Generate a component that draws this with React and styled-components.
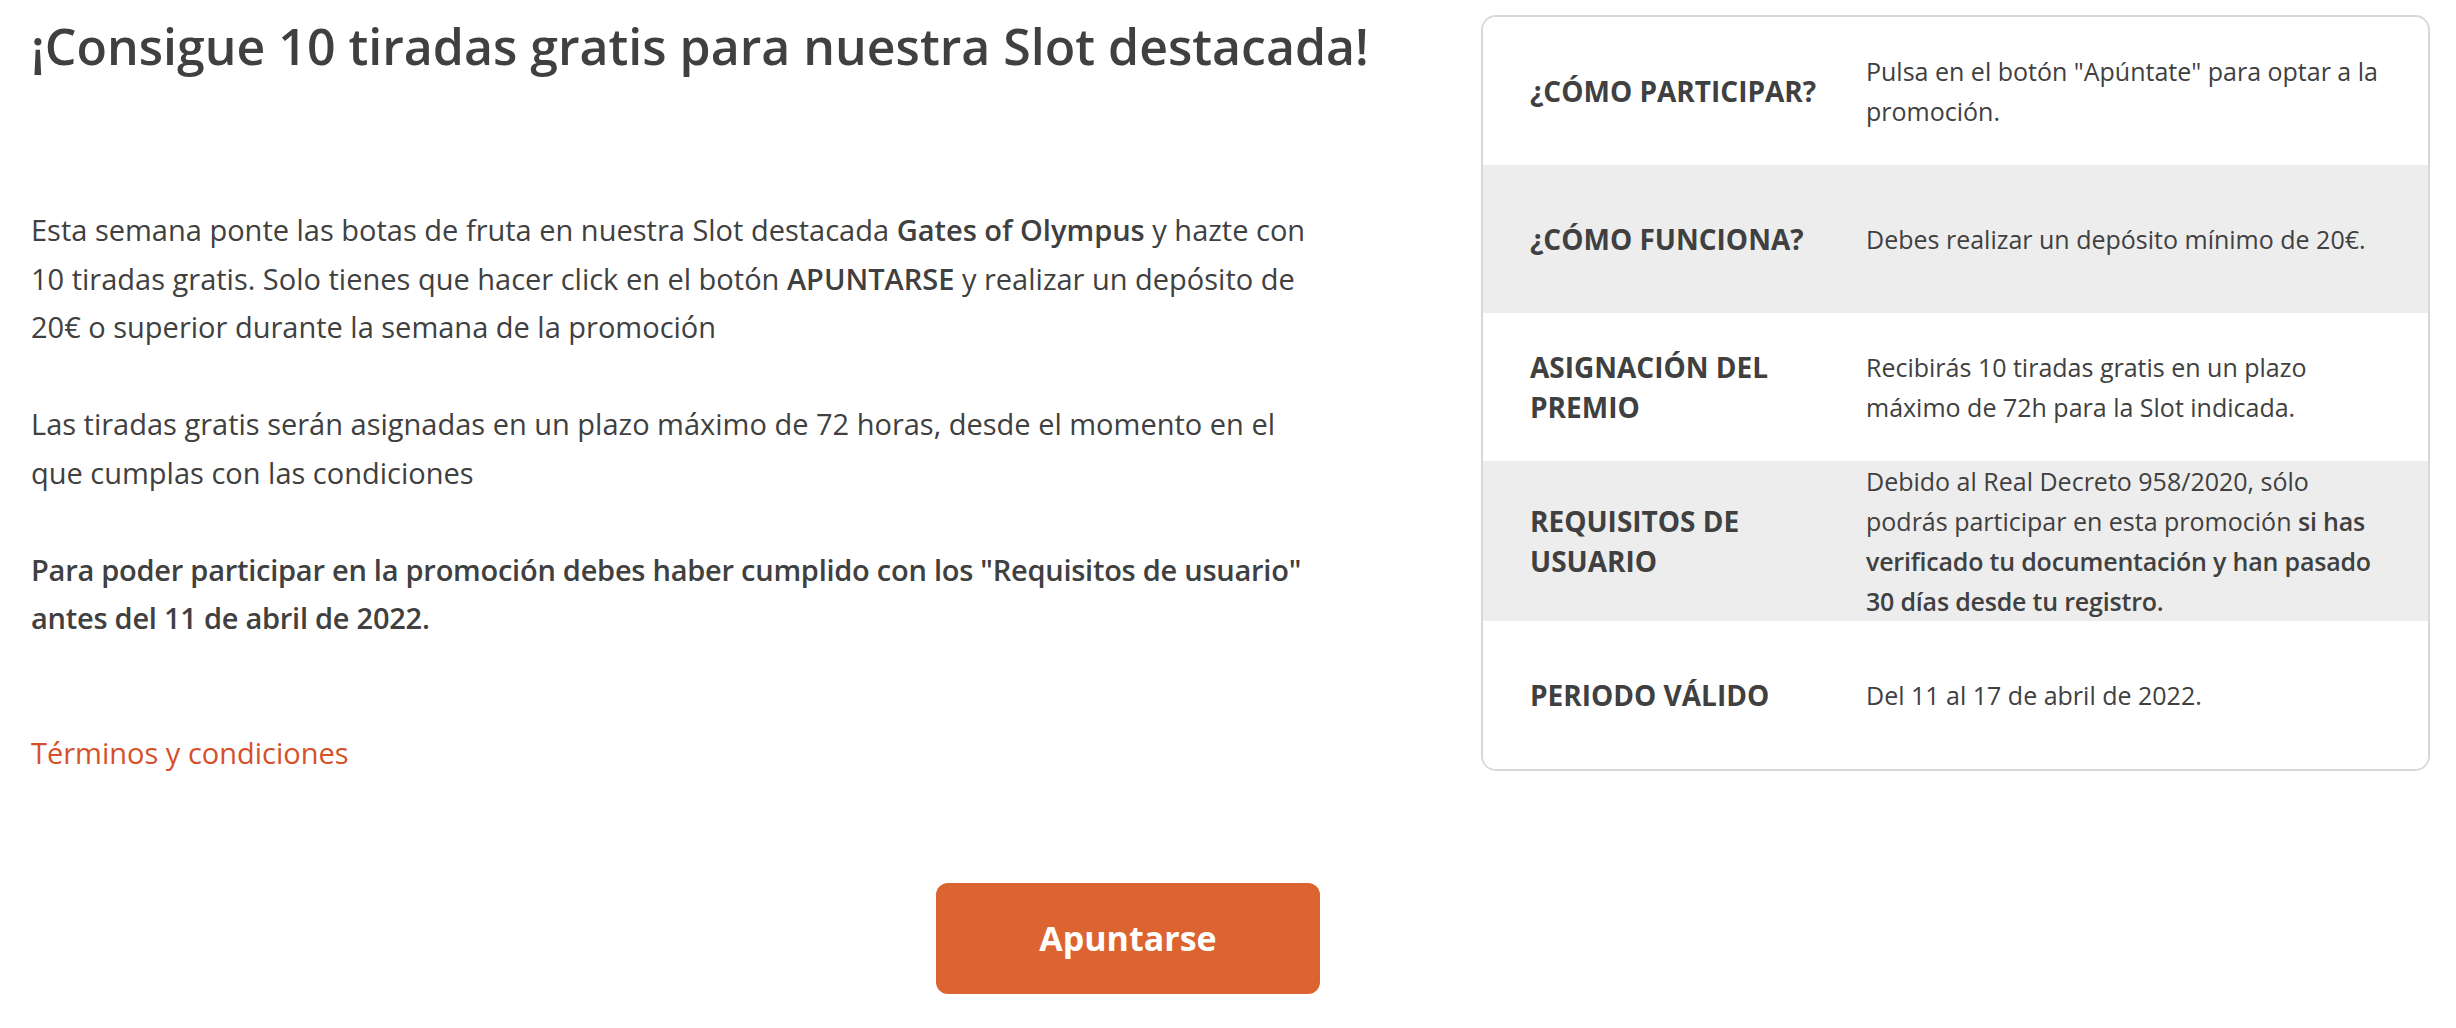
import React from 'react';
import styled, { createGlobalStyle } from 'styled-components';

const GlobalStyle = createGlobalStyle`
  body {
    margin: 0;
    background: #ffffff;
    font-family: 'Open Sans', 'Noto Sans', sans-serif;
    color: #404040;
  }
`;

const Page = styled.div`
  padding: 15px 26px 0 31px;
`;

const Columns = styled.div`
  display: grid;
  grid-template-columns: 1400px 949px;
  column-gap: 50px;
  align-items: start;
`;

const Main = styled.section`
  display: flex;
  flex-direction: column;
  align-items: flex-start;
`;

const Title = styled.h1`
  margin: 0 0 129px;
  font-size: 50px;
  line-height: 62px;
  font-weight: 600;
  color: #404040;
`;

const Paragraph = styled.p`
  margin: 0 0 48.5px;
  max-width: 1300px;
  font-size: 29px;
  line-height: 48.5px;
  font-weight: ${(p) => (p.$strong ? 600 : 400)};
  letter-spacing: ${(p) => (p.$strong ? '-0.25px' : '0')};

  b {
    font-weight: 600;
  }
`;

const TermsLink = styled.a`
  display: block;
  margin-top: 38px;
  font-size: 29px;
  line-height: 48.5px;
  color: #d4512a;
  text-decoration: none;
  cursor: pointer;
`;

const InfoCard = styled.div`
  border: 2px solid #d8d8d8;
  border-radius: 15px;
  overflow: hidden;
  background: #ffffff;
`;

const InfoRow = styled.div`
  display: grid;
  grid-template-columns: 336px 1fr;
  align-items: center;
  min-height: 148px;
  padding: 0 40px 0 47px;
  background: ${(p) => (p.$shaded ? '#ededed' : '#ffffff')};
`;

const InfoLabel = styled.div`
  padding-right: 20px;
  font-size: 28px;
  line-height: 40px;
  font-weight: 700;
  text-transform: uppercase;
`;

const InfoValue = styled.div`
  font-size: 25px;
  line-height: 40px;
  font-weight: 400;

  b {
    font-weight: 600;
    letter-spacing: -0.2px;
  }
`;

const Actions = styled.div`
  display: flex;
  padding: 105px 0 0 905px;
`;

const JoinButton = styled.button`
  width: 384px;
  height: 111px;
  border: none;
  border-radius: 12px;
  background: #db6430;
  color: #ffffff;
  font-family: inherit;
  font-size: 34px;
  font-weight: 700;
  cursor: pointer;
`;

const rows = [
  {
    label: '¿Cómo participar?',
    value: <>Pulsa en el botón "Apúntate" para optar a la promoción.</>,
  },
  {
    label: '¿Cómo funciona?',
    value: <>Debes realizar un depósito mínimo de 20€.</>,
  },
  {
    label: 'Asignación del premio',
    value: <>Recibirás 10 tiradas gratis en un plazo máximo de 72h para la Slot indicada.</>,
  },
  {
    label: 'Requisitos de usuario',
    value: (
      <>
        Debido al Real Decreto 958/2020, sólo podrás participar en esta promoción{' '}
        <b>si has verificado tu documentación y han pasado 30 días desde tu registro.</b>
      </>
    ),
  },
  {
    label: 'Periodo válido',
    value: <>Del 11 al 17 de abril de 2022.</>,
  },
];

export default function App() {
  return (
    <>
      <GlobalStyle />
      <Page>
        <Columns>
          <Main>
            <Title>¡Consigue 10 tiradas gratis para nuestra Slot destacada!</Title>
            <Paragraph>
              Esta semana ponte las botas de fruta en nuestra Slot destacada <b>Gates of Olympus</b> y
              hazte con 10 tiradas gratis. Solo tienes que hacer click en el botón <b>APUNTARSE</b> y
              realizar un depósito de 20€ o superior durante la semana de la promoción
            </Paragraph>
            <Paragraph>
              Las tiradas gratis serán asignadas en un plazo máximo de 72 horas, desde el momento en el
              que cumplas con las condiciones
            </Paragraph>
            <Paragraph $strong>
              Para poder participar en la promoción debes haber cumplido con los "Requisitos de usuario"
              antes del 11 de abril de 2022.
            </Paragraph>
            <TermsLink>Términos y condiciones</TermsLink>
          </Main>
          <InfoCard>
            {rows.map((row, i) => (
              <InfoRow key={row.label} $shaded={i % 2 === 1}>
                <InfoLabel>{row.label}</InfoLabel>
                <InfoValue>{row.value}</InfoValue>
              </InfoRow>
            ))}
          </InfoCard>
        </Columns>
        <Actions>
          <JoinButton>Apuntarse</JoinButton>
        </Actions>
      </Page>
    </>
  );
}
